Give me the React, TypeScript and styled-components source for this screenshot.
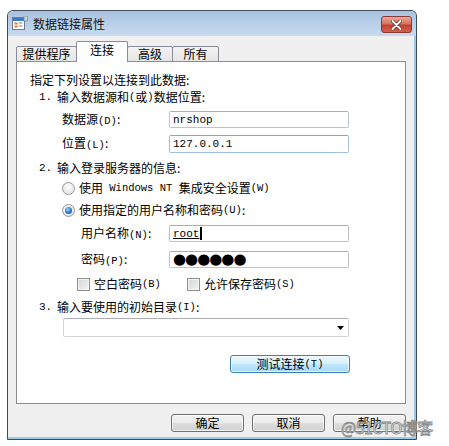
import React from 'react';
import styled, { createGlobalStyle } from 'styled-components';

const GlobalStyle = createGlobalStyle`
  html, body {
    margin: 0;
    padding: 0;
    background: #ffffff;
  }
  body {
    font-family: "Noto Sans CJK SC", "Liberation Sans", sans-serif;
    font-size: 12px;
    color: #000;
  }
`

const Page = styled.div`
  position: relative;
  width: 449px;
  height: 446px;
  padding: 10px 0 0 7px;
  box-sizing: border-box;
`

const Window = styled.div`
  width: 410px;
  height: 430px;
  box-sizing: border-box;
  border: 1px solid #3d4a5a;
  border-radius: 6px 6px 0 0;
  background: #f0f0f0;
  box-shadow: inset -2px -2px 0 #9ccbe6;
  display: flex;
  flex-direction: column;
  overflow: hidden;
`

const TitleBar = styled.div`
  height: 25px;
  flex: none;
  display: flex;
  align-items: center;
  padding: 0 4px 0 4px;
  background: linear-gradient(#a7c1df, #bcd2ea 60%, #c7dbf0);
  border-radius: 5px 5px 0 0;
`

const Title = styled.span`
  margin-left: 5px;
  flex: 1;
  font-size: 12px;
  line-height: 16px;
  color: #111;
`

const CloseButton = styled.div`
  width: 31px;
  height: 17px;
  box-sizing: border-box;
  border: 1px solid #8a3a32;
  border-radius: 3px;
  background: linear-gradient(#e9a99a, #d47462 45%, #c4402f 55%, #d0624c);
  display: flex;
  align-items: center;
  justify-content: center;
  margin-top: 2px;
`

const Body = styled.div`
  flex: 1;
  display: flex;
  flex-direction: column;
  padding: 6px 10px 0 8px;
`

const TabRow = styled.div`
  height: 20px;
  display: flex;
  align-items: flex-end;
  position: relative;
  z-index: 1;
`

const Tab = styled.div<{ $active?: boolean; $w: number }>`
  width: ${(p) => p.$w}px;
  height: ${(p) => (p.$active ? 21 : 16)}px;
  box-sizing: border-box;
  margin-left: -1px;
  border: 1px solid #898c95;
  border-bottom: ${(p) => (p.$active ? 'none' : '1px solid #898c95')};
  border-radius: 2px 2px 0 0;
  background: ${(p) => (p.$active ? '#ffffff' : 'linear-gradient(#f2f2f2, #e6e6e6)')};
  display: flex;
  align-items: ${(p) => (p.$active ? 'flex-start' : 'center')};
  padding-top: ${(p) => (p.$active ? 1 : 0)}px;
  justify-content: center;
  line-height: 14px;
  &:first-child {
    margin-left: 0;
  }
`

const Panel = styled.div`
  height: 343px;
  box-sizing: border-box;
  margin-top: -1px;
  border: 1px solid #898c95;
  background: #ffffff;
  padding-top: 10px;
  display: flex;
  flex-direction: column;
`

const Row = styled.div<{ $gap: number; $h: number; $indent: number }>`
  margin-top: ${(p) => p.$gap}px;
  height: ${(p) => p.$h}px;
  padding-left: ${(p) => p.$indent}px;
  display: flex;
  align-items: center;
  line-height: 16px;
  white-space: nowrap;
`

const StepNo = styled.span`
  width: 18px;
  font-family: "Liberation Mono", monospace;
  font-size: 11px;
`

const Mono = styled.span`
  font-family: "Liberation Mono", monospace;
  font-size: 10.5px;
`

const Label = styled.span<{ $w: number }>`
  width: ${(p) => p.$w}px;
  flex: none;
`

const Input = styled.div<{ $focus?: boolean }>`
  width: 180px;
  height: 100%;
  box-sizing: border-box;
  border: 1px solid ${(p) => (p.$focus ? '#9fc0e3' : '#bfc4cc')};
  border-top-color: ${(p) => (p.$focus ? '#7ea7d6' : '#abadb3')};
  border-radius: 2px;
  background: #fff;
  display: flex;
  align-items: center;
  padding-left: 3px;
  font-family: "Liberation Mono", monospace;
  font-size: 11px;
`

const Underlined = styled.span`
  text-decoration: underline;
`

const Caret = styled.span`
  width: 2px;
  height: 13px;
  background: #000;
  margin-left: 1px;
`

const Dots = styled.span`
  font-family: "DejaVu Sans", sans-serif;
  font-size: 15px;
  letter-spacing: -1px;
  line-height: 15px;
`

const Radio = styled.span<{ $checked?: boolean }>`
  width: 13px;
  height: 13px;
  box-sizing: border-box;
  border-radius: 50%;
  border: 1px solid #979797;
  background: radial-gradient(circle at 50% 40%, #ffffff, #dcdcdc);
  display: flex;
  align-items: center;
  justify-content: center;
  margin-right: 4px;
  flex: none;
  &::after {
    content: '';
    display: ${(p) => (p.$checked ? 'block' : 'none')};
    width: 7px;
    height: 7px;
    border-radius: 50%;
    background: radial-gradient(circle at 40% 35%, #9fd3ff, #2a74c8 55%, #13428a);
  }
`

const Check = styled.span`
  width: 13px;
  height: 13px;
  box-sizing: border-box;
  border: 1px solid #8e8f8f;
  background: linear-gradient(135deg, #d4d4d4, #f4f4f4);
  box-shadow: inset 0 0 0 1px #f4f4f4;
  margin-right: 4px;
  flex: none;
`

const CheckGroup = styled.span<{ $w: number }>`
  width: ${(p) => p.$w}px;
  display: flex;
  align-items: center;
  flex: none;
`

const Combo = styled.div`
  width: 286px;
  height: 100%;
  box-sizing: border-box;
  border: 1px solid #d0d4da;
  border-top-color: #abadb3;
  border-radius: 2px;
  background: #fff;
  display: flex;
  align-items: center;
  justify-content: flex-end;
  padding-right: 4px;
`

const Button = styled.div<{ $w: number; $blue?: boolean }>`
  width: ${(p) => p.$w}px;
  height: 18px;
  box-sizing: border-box;
  border: 1px solid ${(p) => (p.$blue ? '#3c7fb1' : '#707070')};
  border-radius: 3px;
  background: ${(p) =>
    p.$blue
      ? 'linear-gradient(#eaf6fd, #d9f0fc 45%, #bee6fd 55%, #a7d9f5)'
      : 'linear-gradient(#f2f2f2, #ebebeb 45%, #dddddd 55%, #cfcfcf)'};
  box-shadow: inset 0 0 0 1px rgba(255, 255, 255, 0.7);
  display: flex;
  align-items: center;
  justify-content: center;
  line-height: 14px;
`

const Footer = styled.div`
  margin-top: 10px;
  display: flex;
  justify-content: flex-end;
  gap: 8px;
`

const Watermark = styled.div`
  position: absolute;
  left: 341px;
  top: 418px;
  font-family: "Noto Sans CJK SC", sans-serif;
  font-size: 16px;
  line-height: 18px;
  letter-spacing: -0.5px;
  color: rgba(255, 255, 255, 0.9);
  -webkit-text-stroke: 0.8px #8a8a8a;
`

const AppIcon = () => (
  <svg width="16" height="15" viewBox="0 0 16 15">
    <rect x="0.5" y="1.5" width="12" height="12" fill="#fff" stroke="#6b7d93" />
    <rect x="1" y="2" width="11" height="3" fill="#3d7bc4" />
    <rect x="2.5" y="6.5" width="3" height="2" fill="#e07b2a" />
    <rect x="6.5" y="6.5" width="4" height="1" fill="#7a8898" />
    <rect x="2.5" y="9.5" width="3" height="2" fill="#e07b2a" />
    <rect x="6.5" y="9.5" width="4" height="1" fill="#7a8898" />
    <rect x="12" y="0" width="3.5" height="5" fill="#cfd8e3" stroke="#7d8a99" strokeWidth="0.8" />
  </svg>
);

const CloseIcon = () => (
  <svg width="11" height="10" viewBox="0 0 11 10">
    <path d="M1.5 1 L9.5 9 M9.5 1 L1.5 9" stroke="#5a1f18" strokeWidth="3.4" strokeLinecap="round" />
    <path d="M1.5 1 L9.5 9 M9.5 1 L1.5 9" stroke="#ffffff" strokeWidth="2" strokeLinecap="round" />
  </svg>
);

const ArrowDown = () => (
  <svg width="7" height="4" viewBox="0 0 7 4">
    <path d="M0 0 H7 L3.5 4 Z" fill="#000" />
  </svg>
);

export default function App() {
  return (
    <Page>
      <GlobalStyle />
      <Window>
        <TitleBar>
          <AppIcon />
          <Title>数据链接属性</Title>
          <CloseButton>
            <CloseIcon />
          </CloseButton>
        </TitleBar>
        <Body>
          <TabRow>
            <Tab $w={61}>提供程序</Tab>
            <Tab $w={52} $active>连接</Tab>
            <Tab $w={46}>高级</Tab>
            <Tab $w={47}>所有</Tab>
          </TabRow>
          <Panel>
            <Row $gap={0} $h={16} $indent={13}>指定下列设置以连接到此数据:</Row>
            <Row $gap={1} $h={16} $indent={22}>
              <StepNo>1.</StepNo>输入数据源和<Mono>(</Mono>或<Mono>)</Mono>数据位置:
            </Row>
            <Row $gap={6} $h={17} $indent={45}>
              <Label $w={107}>数据源<Mono>(D)</Mono>:</Label>
              <Input>nrshop</Input>
            </Row>
            <Row $gap={7} $h={18} $indent={45}>
              <Label $w={107}>位置<Mono>(L)</Mono>:</Label>
              <Input $focus>127.0.0.1</Input>
            </Row>
            <Row $gap={7} $h={16} $indent={22}>
              <StepNo>2.</StepNo>输入登录服务器的信息:
            </Row>
            <Row $gap={4} $h={16} $indent={45}>
              <Radio />使用 <Mono>&nbsp;Windows NT&nbsp;</Mono> 集成安全设置<Mono>(W)</Mono>
            </Row>
            <Row $gap={6} $h={16} $indent={45}>
              <Radio $checked />使用指定的用户名称和密码<Mono>(U)</Mono>:
            </Row>
            <Row $gap={7} $h={17} $indent={64}>
              <Label $w={88}>用户名称<Mono>(N)</Mono>:</Label>
              <Input>
                <Underlined>root</Underlined>
                <Caret />
              </Input>
            </Row>
            <Row $gap={9} $h={17} $indent={64}>
              <Label $w={88}>密码<Mono>(P)</Mono>:</Label>
              <Input>
                <Dots>●●●●●●</Dots>
              </Input>
            </Row>
            <Row $gap={8} $h={16} $indent={60}>
              <CheckGroup $w={110}>
                <Check />空白密码<Mono>(B)</Mono>
              </CheckGroup>
              <CheckGroup $w={160}>
                <Check />允许保存密码<Mono>(S)</Mono>
              </CheckGroup>
            </Row>
            <Row $gap={7} $h={16} $indent={22}>
              <StepNo>3.</StepNo>输入要使用的初始目录<Mono>(I)</Mono>:
            </Row>
            <Row $gap={3} $h={19} $indent={46}>
              <Combo>
                <ArrowDown />
              </Combo>
            </Row>
            <Row $gap={18} $h={18} $indent={213}>
              <Button $w={120} $blue>测试连接<Mono>(T)</Mono></Button>
            </Row>
          </Panel>
          <Footer>
            <Button $w={73}>确定</Button>
            <Button $w={73}>取消</Button>
            <Button $w={73}>帮助</Button>
          </Footer>
        </Body>
      </Window>
      <Watermark>@51CTO博客</Watermark>
    </Page>
  );
}
